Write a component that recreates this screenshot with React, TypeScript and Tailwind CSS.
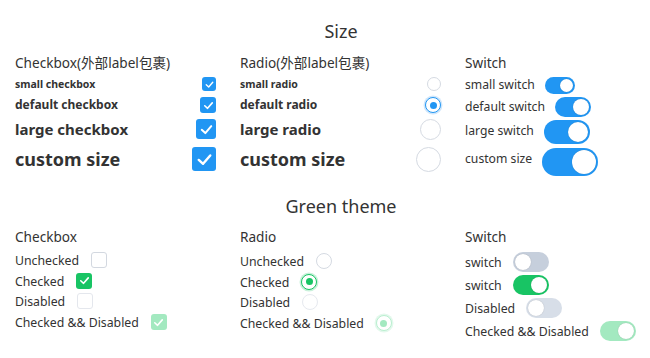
import type { ReactNode } from 'react';

type Tone = 'blue' | 'green';

const toneBg: Record<Tone, string> = {
  blue: 'bg-[#2196f3]',
  green: 'bg-[#18c464]',
};

const CheckMark = ({ size }: { size: number }) => (
  <svg width={size} height={size} viewBox="0 0 16 16" fill="none">
    <polyline
      points="4,8.3 7,11 12,5.2"
      stroke="white"
      strokeWidth="1.7"
      strokeLinecap="round"
      strokeLinejoin="round"
    />
  </svg>
);

const Checkbox = ({
  box = 'w-4 h-4',
  icon = 16,
  tone = 'blue',
  checked,
  disabled,
}: {
  box?: string;
  icon?: number;
  tone?: Tone;
  checked?: boolean;
  disabled?: boolean;
}) => {
  if (!checked) {
    return (
      <span
        className={`${box} shrink-0 rounded-[3px] border ${
          disabled ? 'border-[#e4e7ed] bg-white' : 'border-[#d3d8e0] bg-white'
        }`}
      />
    );
  }
  return (
    <span
      className={`${box} shrink-0 rounded-[3px] flex items-center justify-center ${
        disabled ? 'bg-[#a3e9c0]' : toneBg[tone]
      }`}
    >
      <CheckMark size={icon} />
    </span>
  );
};

const Radio = ({
  box = 'w-4 h-4',
  tone = 'blue',
  checked,
  disabled,
}: {
  box?: string;
  tone?: Tone;
  checked?: boolean;
  disabled?: boolean;
}) => {
  if (!checked) {
    return (
      <span
        className={`${box} shrink-0 rounded-full border ${
          disabled ? 'border-[#e6e9ef]' : 'border-[#d5dae2]'
        } bg-white`}
      />
    );
  }
  const ring =
    tone === 'blue'
      ? 'border-[#2196f3] shadow-[0_0_0_1.5px_#cfe6fb]'
      : disabled
        ? 'border-[#b8efcf] shadow-[0_0_0_1.5px_#e3f8ec]'
        : 'border-[#18c464] shadow-[0_0_0_1.5px_#c8f1da]';
  const dot = tone === 'blue' ? 'bg-[#2196f3]' : disabled ? 'bg-[#a3e9c0]' : 'bg-[#18c464]';
  return (
    <span className={`${box} shrink-0 rounded-full border bg-white flex items-center justify-center ${ring}`}>
      <span className={`w-1/2 h-1/2 rounded-full ${dot}`} />
    </span>
  );
};

const Switch = ({
  track = 'w-9 h-5',
  on,
  tone = 'blue',
  disabled,
}: {
  track?: string;
  on?: boolean;
  tone?: Tone;
  disabled?: boolean;
}) => {
  const bg = on
    ? disabled
      ? 'bg-[#a3e9c0]'
      : toneBg[tone]
    : disabled
      ? 'bg-[#d7dee8]'
      : 'bg-[#c6cfdc]';
  return (
    <span className={`${track} shrink-0 rounded-full p-[2px] flex ${on ? 'justify-end' : 'justify-start'} ${bg}`}>
      <span className="h-full aspect-square rounded-full bg-white shadow-[0_0_1px_rgba(0,0,0,0.25)]" />
    </span>
  );
};

const Heading = ({ children, className = '' }: { children: ReactNode; className?: string }) => (
  <h3 className={`h-5 leading-5 text-[13.6px] text-[#333] ${className}`}>{children}</h3>
);

const SizeRow = ({
  label,
  text,
  className,
  children,
}: {
  label: string;
  text: string;
  className: string;
  children: ReactNode;
}) => (
  <label className={`w-[201px] flex items-center justify-between ${className}`}>
    <span className={`font-bold leading-none whitespace-nowrap ${text}`}>{label}</span>
    {children}
  </label>
);

const SwitchRow = ({
  label,
  className,
  textClass = '',
  children,
}: {
  label: string;
  className: string;
  textClass?: string;
  children: ReactNode;
}) => (
  <label className={`flex items-center gap-[10px] ${className}`}>
    <span className={`text-[12.2px] leading-none whitespace-nowrap ${textClass}`}>{label}</span>
    {children}
  </label>
);

const GreenRow = ({ label, gap = 'gap-3', className = 'h-4', children }: { label: string; gap?: string; className?: string; children: ReactNode }) => (
  <label className={`flex items-center ${gap} ${className}`}>
    <span className="text-[12.3px] leading-none whitespace-nowrap pt-[2px]">{label}</span>
    {children}
  </label>
);

export default function App() {
  return (
    <div
      className="w-[650px] h-[358px] overflow-hidden bg-white text-[#333]"
      style={{ fontFamily: '"Noto Sans", "Noto Sans CJK SC", sans-serif' }}
    >
      <div className="w-[682px]">
        <h2 className="pt-[19px] leading-6 text-[18px] text-center text-[#333]">Size</h2>

        <div className="grid grid-cols-[225px_225px_232px] items-start">
          <div className="pl-[15px] flex flex-col">
            <Heading className="mt-[10px]">Checkbox(外部label包裹)</Heading>
            <SizeRow label="small checkbox" text="text-[10.5px]" className="mt-[4px] h-[14px]">
              <Checkbox box="w-[14px] h-[14px]" icon={13} checked />
            </SizeRow>
            <SizeRow label="default checkbox" text="text-[12px]" className="mt-[6px] h-4">
              <Checkbox box="w-4 h-4" icon={15} checked />
            </SizeRow>
            <SizeRow label="large checkbox" text="text-[15px]" className="mt-[6px] h-5">
              <Checkbox box="w-5 h-5" icon={19} checked />
            </SizeRow>
            <SizeRow label="custom size" text="text-[18px]" className="mt-[8px] h-6">
              <Checkbox box="w-6 h-6" icon={23} checked />
            </SizeRow>
          </div>

          <div className="pl-[15px] flex flex-col">
            <Heading className="mt-[10px]">Radio(外部label包裹)</Heading>
            <SizeRow label="small radio" text="text-[10.5px]" className="mt-[4px] h-[14px]">
              <Radio box="w-[14px] h-[14px]" />
            </SizeRow>
            <SizeRow label="default radio" text="text-[12px]" className="mt-[6px] h-4">
              <Radio box="w-4 h-4" checked />
            </SizeRow>
            <SizeRow label="large radio" text="text-[15px]" className="mt-[6px] h-5">
              <Radio box="w-[21px] h-[21px]" />
            </SizeRow>
            <SizeRow label="custom size" text="text-[18px]" className="mt-[8px] h-6">
              <Radio box="w-[25px] h-[25px]" />
            </SizeRow>
          </div>

          <div className="pl-[15px] flex flex-col">
            <Heading className="mt-[10px]">Switch</Heading>
            <SwitchRow label="small switch" className="mt-[4px] h-[17px]">
              <Switch track="w-[30px] h-[17px]" on />
            </SwitchRow>
            <SwitchRow label="default switch" className="mt-[3px] h-5">
              <Switch track="w-9 h-5" on />
            </SwitchRow>
            <SwitchRow label="large switch" className="mt-[3px] h-6" textClass="-mt-[2px]">
              <Switch track="w-[46px] h-6" on />
            </SwitchRow>
            <SwitchRow label="custom size" className="mt-[4px] h-7" textClass="-mt-[6px]">
              <Switch track="w-[56px] h-7" on />
            </SwitchRow>
          </div>
        </div>

        <h2 className="mt-[18px] leading-6 text-[18px] text-center text-[#333]">Green theme</h2>

        <div className="grid grid-cols-[225px_225px_232px] items-start">
          <div className="pl-[15px] flex flex-col">
            <Heading className="mt-[9px]">Checkbox</Heading>
            <div className="mt-[5px] flex flex-col gap-[4.7px]">
              <GreenRow label="Unchecked">
                <Checkbox tone="green" />
              </GreenRow>
              <GreenRow label="Checked">
                <Checkbox tone="green" icon={15} checked />
              </GreenRow>
              <GreenRow label="Disabled">
                <Checkbox tone="green" disabled />
              </GreenRow>
              <GreenRow label="Checked && Disabled">
                <Checkbox tone="green" icon={15} checked disabled />
              </GreenRow>
            </div>
          </div>

          <div className="pl-[15px] flex flex-col">
            <Heading className="mt-[9px]">Radio</Heading>
            <div className="mt-[6px] flex flex-col gap-[4.7px]">
              <GreenRow label="Unchecked">
                <Radio tone="green" />
              </GreenRow>
              <GreenRow label="Checked">
                <Radio tone="green" checked />
              </GreenRow>
              <GreenRow label="Disabled">
                <Radio tone="green" disabled />
              </GreenRow>
              <GreenRow label="Checked && Disabled">
                <Radio tone="green" checked disabled />
              </GreenRow>
            </div>
          </div>

          <div className="pl-[15px] flex flex-col">
            <Heading className="mt-[9px]">Switch</Heading>
            <div className="mt-[5px] flex flex-col gap-[3px]">
              <GreenRow label="switch" gap="gap-[11px]" className="h-5">
                <Switch tone="green" />
              </GreenRow>
              <GreenRow label="switch" gap="gap-[11px]" className="h-5">
                <Switch tone="green" on />
              </GreenRow>
              <GreenRow label="Disabled" gap="gap-[11px]" className="h-5">
                <Switch tone="green" disabled />
              </GreenRow>
              <GreenRow label="Checked && Disabled" gap="gap-[11px]" className="h-5">
                <Switch tone="green" on disabled />
              </GreenRow>
            </div>
          </div>
        </div>
      </div>
    </div>
  );
}
